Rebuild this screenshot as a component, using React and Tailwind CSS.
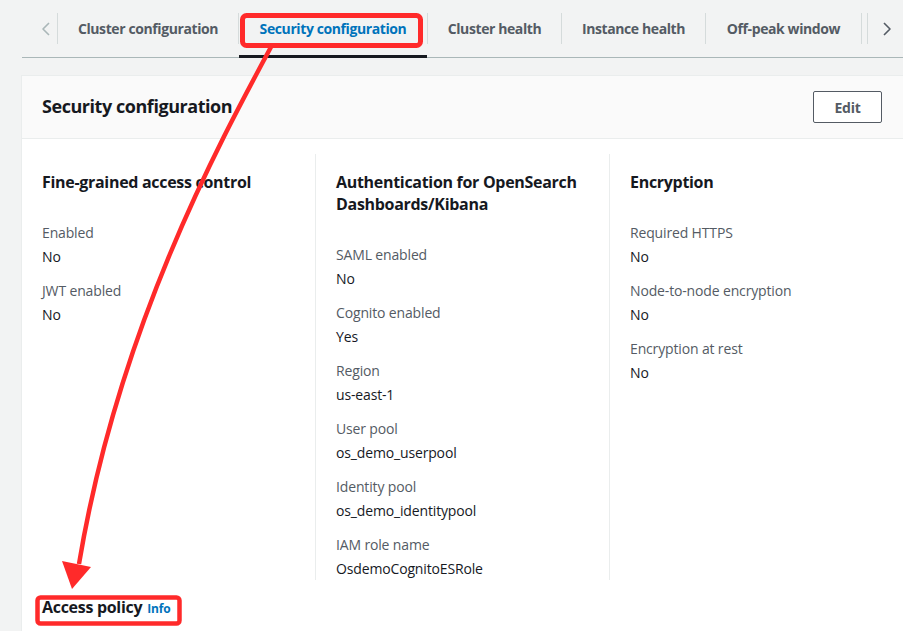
import React from "react";

const TABS = [
  { label: "Cluster configuration", w: "w-[180px]" },
  { label: "Security configuration", w: "w-[188px]", active: true },
  { label: "Cluster health", w: "w-[133px]" },
  { label: "Instance health", w: "w-[143px]" },
  { label: "Off-peak window", w: "w-[155px]" },
];

const COLUMNS = [
  {
    title: ["Fine-grained access control"],
    w: "w-[273px]",
    items: [
      ["Enabled", "No"],
      ["JWT enabled", "No"],
    ],
  },
  {
    title: ["Authentication for OpenSearch", "Dashboards/Kibana"],
    w: "w-[294px] border-l border-[#eaeded] pl-[20px]",
    items: [
      ["SAML enabled", "No"],
      ["Cognito enabled", "Yes"],
      ["Region", "us-east-1"],
      ["User pool", "os_demo_userpool"],
      ["Identity pool", "os_demo_identitypool"],
      ["IAM role name", "OsdemoCognitoESRole"],
    ],
  },
  {
    title: ["Encryption"],
    w: "flex-1 border-l border-[#eaeded] pl-[20px]",
    items: [
      ["Required HTTPS", "No"],
      ["Node-to-node encryption", "No"],
      ["Encryption at rest", "No"],
    ],
  },
];

const Separator = () => <div className="w-px h-[31px] bg-[#d5dbdb]" />;

const Chevron = ({ dir }) => (
  <svg width="16" height="16" viewBox="0 0 16 16" fill="none">
    <path
      d={dir === "left" ? "M10 2 L4 8 L10 14" : "M6 2 L12 8 L6 14"}
      stroke={dir === "left" ? "#aab7b8" : "#545b64"}
      strokeWidth="1.6"
      strokeLinejoin="round"
    />
  </svg>
);

const Annotations = () => (
  <svg
    className="absolute left-0 top-0 pointer-events-none"
    width="903"
    height="631"
    viewBox="0 0 903 631"
  >
    <rect x="242.5" y="15.5" width="178" height="30" rx="4" fill="none" stroke="#ff2a2a" strokeWidth="5" />
    <rect x="37.5" y="597.5" width="142" height="26" rx="3" fill="none" stroke="#ff2a2a" strokeWidth="4.5" />
    <path d="M271 47 C 218 145, 118 330, 79 564" fill="none" stroke="#ff2a2a" strokeWidth="4.5" />
    <polygon points="62,561 91,567 72,589" fill="#ff2a2a" />
  </svg>
);

export default function App() {
  return (
    <div
      className="relative w-[903px] h-[631px] overflow-hidden bg-[#f2f3f3] text-[#16191f] tracking-[-0.15px]"
      style={{ fontFamily: '"Open Sans", "Liberation Sans", sans-serif' }}
    >
      {/* Tabs */}
      <div className="ml-[22px] h-[58px] flex items-center border-b border-[#aab7b8] relative">
        <div className="w-[35px] flex justify-end pr-[2px]">
          <Chevron dir="left" />
        </div>
        <Separator />
        {TABS.map((t) => (
          <React.Fragment key={t.label}>
            <div
              className={`${t.w} h-full flex items-center justify-center text-[14px] font-bold tracking-[-0.4px] relative ${
                t.active ? "text-[#0073bb]" : "text-[#545b64]"
              }`}
            >
              {t.label}
              {t.active && (
                <div className="absolute left-0 right-0 bottom-[-1px] h-[3px] bg-[#16191f]" />
              )}
            </div>
            <Separator />
          </React.Fragment>
        ))}
        <div className="ml-[5px]">
          <Separator />
        </div>
        <div className="ml-[10px]">
          <Chevron dir="right" />
        </div>
      </div>

      {/* Card */}
      <div className="ml-[21px] mt-[17px] border-l border-t border-[#eaeded] bg-white min-h-[600px]">
        <div className="h-[63px] bg-[#fafafa] border-b border-[#eaeded] flex items-center justify-between pl-[20px] pr-[21px]">
          <h2 className="text-[18px] font-bold leading-[24px] tracking-[-0.45px] -mt-[2px]">
            Security configuration
          </h2>
          <button className="w-[69px] h-[32px] border border-[#545b64] rounded-[2px] bg-white text-[14px] font-bold text-[#545b64] tracking-[-0.3px]">
            Edit
          </button>
        </div>

        <div className="pl-[20px] pt-[15px] flex">
          {COLUMNS.map((col, ci) => (
            <div key={ci} className={`${col.w} pt-[17px] pb-px`}>
              <h3 className="text-[16px] font-bold leading-[22px] tracking-[-0.3px]">
                {col.title.map((l) => (
                  <div key={l}>{l}</div>
                ))}
              </h3>
              <div className="mt-[30px] flex flex-col gap-[14px]">
                {col.items.map(([k, v]) => (
                  <div key={k} className="text-[14px] leading-[20px]">
                    <div className="text-[#545b64]">{k}</div>
                    <div className="mt-[4px]">{v}</div>
                  </div>
                ))}
              </div>
            </div>
          ))}
        </div>

        <div className="pl-[20px] pt-[16px] flex items-baseline gap-[5px]">
          <h3 className="text-[16px] font-bold leading-[22px] tracking-[-0.3px]">Access policy</h3>
          <span className="text-[12px] font-bold text-[#0073bb] tracking-[-0.2px]">Info</span>
        </div>
      </div>

      <Annotations />
    </div>
  );
}
